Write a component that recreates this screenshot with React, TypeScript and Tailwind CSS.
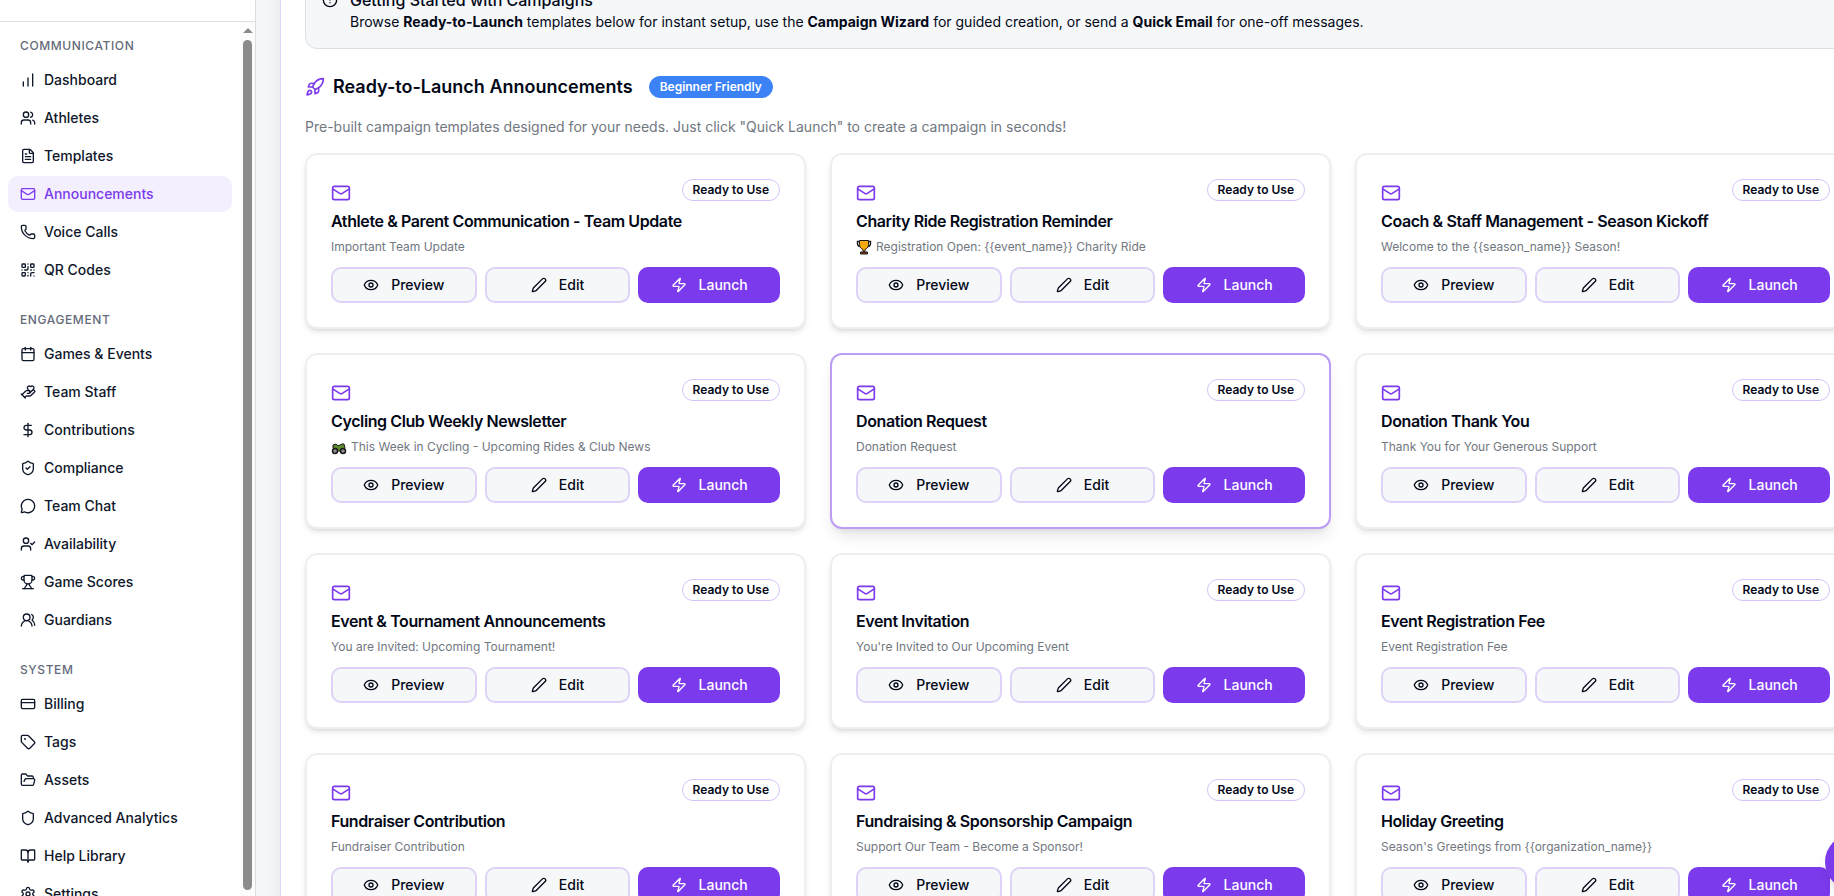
import type { LucideIcon } from "lucide-react";
import {
	BookOpen,
	Calendar,
	ChartNoAxesColumnIncreasing,
	CircleAlert,
	CreditCard,
	DollarSign,
	Eye,
	FileText,
	FolderOpen,
	HandHeart,
	Mail,
	MessageCircle,
	Pen,
	Phone,
	QrCode,
	Rocket,
	Settings,
	Shield,
	ShieldCheck,
	Tag,
	Trophy,
	UserCheck,
	Users,
	UsersRound,
	Zap,
} from "lucide-react";
import type { ReactNode } from "react";

type NavItem = { label: string; icon: LucideIcon; active?: boolean };
type NavSection = { title: string; items: NavItem[] };

const sections: NavSection[] = [
	{
		title: "Communication",
		items: [
			{ label: "Dashboard", icon: ChartNoAxesColumnIncreasing },
			{ label: "Athletes", icon: Users },
			{ label: "Templates", icon: FileText },
			{ label: "Announcements", icon: Mail, active: true },
			{ label: "Voice Calls", icon: Phone },
			{ label: "QR Codes", icon: QrCode },
		],
	},
	{
		title: "Engagement",
		items: [
			{ label: "Games & Events", icon: Calendar },
			{ label: "Team Staff", icon: HandHeart },
			{ label: "Contributions", icon: DollarSign },
			{ label: "Compliance", icon: ShieldCheck },
			{ label: "Team Chat", icon: MessageCircle },
			{ label: "Availability", icon: UserCheck },
			{ label: "Game Scores", icon: Trophy },
			{ label: "Guardians", icon: UsersRound },
		],
	},
	{
		title: "System",
		items: [
			{ label: "Billing", icon: CreditCard },
			{ label: "Tags", icon: Tag },
			{ label: "Assets", icon: FolderOpen },
			{ label: "Advanced Analytics", icon: Shield },
			{ label: "Help Library", icon: BookOpen },
			{ label: "Settings", icon: Settings },
		],
	},
];

function TrophyEmoji() {
	return (
		<svg viewBox="0 0 16 16" className="size-4 shrink-0" aria-hidden="true">
			<path
				d="M3.5 2.5H1.5v2c0 2 1 3 3 3M12.5 2.5h2v2c0 2-1 3-3 3"
				fill="none"
				stroke="#1a1a1a"
				strokeWidth="1.4"
			/>
			<path
				d="M3.5 1.5h9v4c0 3-2 4.5-3.5 5v2h-2v-2c-1.5-.5-3.5-2-3.5-5z"
				fill="#f7a80d"
				stroke="#1a1a1a"
			/>
			<path d="M4.5 13h7v2h-7z" fill="#8a4b20" stroke="#1a1a1a" />
		</svg>
	);
}

function BikeEmoji() {
	return (
		<svg viewBox="0 0 16 16" className="size-4 shrink-0" aria-hidden="true">
			<path
				d="M2 6l3-1 2 2 4-2h2l1 4-3 3H6L2 9z"
				fill="#5d8a2b"
				stroke="#1a1a1a"
			/>
			<circle cx="4" cy="12" r="2.5" fill="#8f8f8f" stroke="#1a1a1a" strokeWidth="1.5" />
			<circle cx="12" cy="12" r="2.5" fill="#8f8f8f" stroke="#1a1a1a" strokeWidth="1.5" />
		</svg>
	);
}

type Template = {
	title: string;
	subject: string;
	emoji?: ReactNode;
	highlighted?: boolean;
};

const templates: Template[] = [
	{
		title: "Athlete & Parent Communication - Team Update",
		subject: "Important Team Update",
	},
	{
		title: "Charity Ride Registration Reminder",
		subject: "Registration Open: {{event_name}} Charity Ride",
		emoji: <TrophyEmoji />,
	},
	{
		title: "Coach & Staff Management - Season Kickoff",
		subject: "Welcome to the {{season_name}} Season!",
	},
	{
		title: "Cycling Club Weekly Newsletter",
		subject: "This Week in Cycling - Upcoming Rides & Club News",
		emoji: <BikeEmoji />,
	},
	{
		title: "Donation Request",
		subject: "Donation Request",
		highlighted: true,
	},
	{
		title: "Donation Thank You",
		subject: "Thank You for Your Generous Support",
	},
	{
		title: "Event & Tournament Announcements",
		subject: "You are Invited: Upcoming Tournament!",
	},
	{
		title: "Event Invitation",
		subject: "You're Invited to Our Upcoming Event",
	},
	{ title: "Event Registration Fee", subject: "Event Registration Fee" },
	{ title: "Fundraiser Contribution", subject: "Fundraiser Contribution" },
	{
		title: "Fundraising & Sponsorship Campaign",
		subject: "Support Our Team - Become a Sponsor!",
	},
	{
		title: "Holiday Greeting",
		subject: "Season's Greetings from {{organization_name}}",
	},
];

function NavLink({ item }: { item: NavItem }) {
	const Icon = item.icon;
	return (
		<a
			href="#"
			className={`flex h-9 items-center gap-2 rounded-[10px] px-3 text-sm font-medium ${
				item.active ? "bg-[#f3efff] text-[#7c3aed]" : "text-[#0f172a]"
			}`}
		>
			<Icon className="size-4 shrink-0" />
			{item.label}
		</a>
	);
}

function Sidebar() {
	return (
		<aside className="flex w-64 shrink-0 flex-col border-r border-[#dcdde1] bg-white">
			<div className="h-[22px] shrink-0 border-b border-[#dcdde1]" />
			<div className="flex min-h-0 flex-1">
				<nav className="flex min-w-0 flex-1 flex-col gap-4 overflow-hidden p-2">
					{sections.map((section) => (
						<div key={section.title} className="shrink-0">
							<h2 className="flex h-8 items-center px-3 text-xs font-medium tracking-wider text-[#646b79] uppercase">
								{section.title}
							</h2>
							<div className="flex flex-col gap-0.5">
								{section.items.map((item) => (
									<NavLink key={item.label} item={item} />
								))}
							</div>
						</div>
					))}
				</nav>
				<div className="flex w-[15px] shrink-0 flex-col items-center bg-[#fcfcfc] pt-1.5 pb-1.5">
					<svg viewBox="0 0 10 5" className="h-[5px] w-2.5 shrink-0" aria-hidden="true">
						<path d="M0 5L5 0l5 5z" fill="#8b8b8b" />
					</svg>
					<div className="mt-[7px] w-[9px] flex-1 rounded-full bg-[#8b8b8b]" />
				</div>
			</div>
		</aside>
	);
}

function TemplateCard({ template }: { template: Template }) {
	return (
		<article
			className={`rounded-xl border-2 bg-white p-6 ${
				template.highlighted
					? "border-[#bd9cf6] shadow-lg"
					: "border-[#eeeff0] shadow-md"
			}`}
		>
			<div className="flex h-6 items-end justify-between">
				<Mail className="size-5 text-[#7c3aed]" />
				<span className="self-start rounded-full border border-[#d8c4fb] px-2.5 py-0.5 text-xs font-semibold">
					Ready to Use
				</span>
			</div>
			<h3 className="mt-1.5 truncate text-base font-semibold tracking-tight">
				{template.title}
			</h3>
			<p className="mt-1.5 flex items-center gap-1 text-xs text-[#71777f]">
				{template.emoji}
				{template.subject}
			</p>
			<div className="mt-3 flex gap-2">
				<button
					type="button"
					className="flex h-9 flex-1 items-center justify-center gap-3 rounded-[10px] border-2 border-[#dfd2f8] bg-[#f5f7f9] px-3 text-sm font-medium"
				>
					<Eye className="size-4" />
					Preview
				</button>
				<button
					type="button"
					className="flex h-9 flex-1 items-center justify-center gap-3 rounded-[10px] border-2 border-[#dfd2f8] bg-[#f5f7f9] px-3 text-sm font-medium"
				>
					<Pen className="size-4" />
					Edit
				</button>
				<button
					type="button"
					className="flex h-9 flex-1 items-center justify-center gap-3 rounded-[10px] bg-[#7c3aed] px-3 text-sm font-medium text-white"
				>
					<Zap className="size-4" />
					Launch
				</button>
			</div>
		</article>
	);
}

export default function App() {
	return (
		<div className="relative flex h-screen overflow-hidden bg-[#f5f7f9] font-[Inter,sans-serif] text-[#020817]">
			<Sidebar />
			<main className="min-w-0 flex-1 pl-6">
				{/* the panel is scrolled up and runs past the right edge */}
				<div className="-mt-[50px] -mr-[47px] border border-[#e2d5fa] bg-white p-6 shadow-xl">
					<div className="flex gap-3 rounded-xl border border-[#dcdfe6] bg-[#f5f7f9] p-4">
						<CircleAlert className="size-4 shrink-0" />
						<div>
							<h2 className="mb-1 text-base leading-4 font-medium">
								Getting Started with Campaigns
							</h2>
							<p className="text-sm">
								Browse <strong className="font-bold">Ready-to-Launch</strong>{" "}
								templates below for instant setup, use the{" "}
								<strong className="font-bold">Campaign Wizard</strong> for
								guided creation, or send a{" "}
								<strong className="font-bold">Quick Email</strong> for one-off
								messages.
							</p>
						</div>
					</div>

					<div className="mt-6 flex items-center gap-4">
						<h1 className="flex items-center gap-2 text-lg leading-7 font-semibold">
							<Rocket className="size-5 text-[#7c3aed]" />
							Ready-to-Launch Announcements
						</h1>
						<span className="rounded-full border border-[#3b82f6] bg-[#3b82f6] px-2.5 py-0.5 text-xs font-semibold text-white">
							Beginner Friendly
						</span>
					</div>
					<p className="mt-4 text-sm text-[#71777f]">
						Pre-built campaign templates designed for your needs. Just click
						"Quick Launch" to create a campaign in seconds!
					</p>

					<div className="mt-4 grid grid-cols-3 gap-6">
						{templates.map((template) => (
							<TemplateCard key={template.title} template={template} />
						))}
					</div>
				</div>
			</main>
			<button
				type="button"
				aria-label="Open chat"
				className="absolute -right-[47px] bottom-1.5 size-14 rounded-full bg-[#7c3aed] shadow-lg"
			/>
		</div>
	);
}
